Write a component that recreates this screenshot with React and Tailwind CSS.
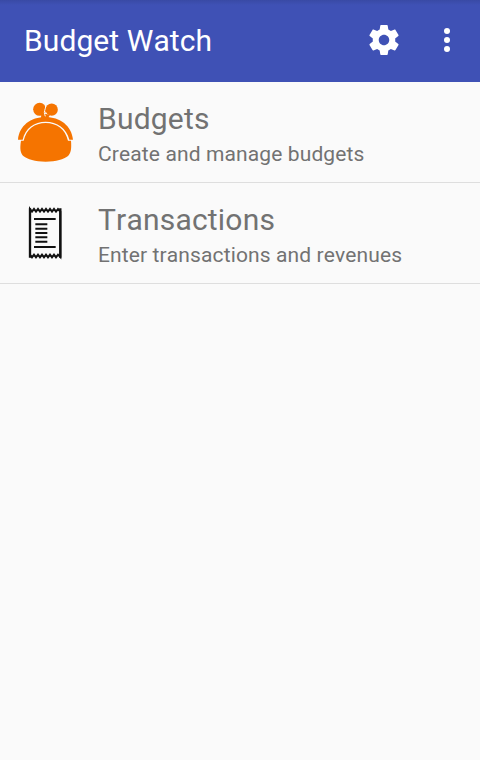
function GearIcon() {
  return (
    <svg viewBox="0 0 24 24" className="h-9 w-9" fill="currentColor">
      <path d="M19.43 12.98c.04-.32.07-.64.07-.98s-.03-.66-.07-.98l2.11-1.65c.19-.15.24-.42.12-.64l-2-3.46c-.12-.22-.39-.3-.61-.22l-2.49 1c-.52-.4-1.08-.73-1.69-.98l-.38-2.65C14.46 2.18 14.25 2 14 2h-4c-.25 0-.46.18-.49.42l-.38 2.65c-.61.25-1.17.59-1.69.98l-2.49-1c-.23-.09-.49 0-.61.22l-2 3.46c-.13.22-.07.49.12.64l2.11 1.65c-.04.32-.07.65-.07.98s.03.66.07.98l-2.11 1.65c-.19.15-.24.42-.12.64l2 3.46c.12.22.39.3.61.22l2.49-1c.52.4 1.08.73 1.69.98l.38 2.65c.03.24.24.42.49.42h4c.25 0 .46-.18.49-.42l.38-2.65c.61-.25 1.17-.59 1.69-.98l2.49 1c.23.09.49 0 .61-.22l2-3.46c.12-.22.07-.49-.12-.64l-2.11-1.65zM12 15.5c-1.93 0-3.5-1.57-3.5-3.5s1.57-3.5 3.5-3.5 3.5 1.57 3.5 3.5-1.57 3.5-3.5 3.5z" />
    </svg>
  );
}

function MoreIcon() {
  return (
    <svg viewBox="0 0 24 24" className="h-9 w-9" fill="currentColor">
      <circle cx="12" cy="6" r="2" />
      <circle cx="12" cy="12" r="2" />
      <circle cx="12" cy="18" r="2" />
    </svg>
  );
}

function PurseIcon() {
  return (
    <svg viewBox="0 0 210 225" className="h-[75px] w-[70px]" fill="#f57400">
      <circle cx="89" cy="43" r="19.5" />
      <circle cx="125" cy="44" r="18.5" />
      <path d="M94 56h10l16 3-6 10H93z" />
      <path d="M106 30c3 9-3 14-3 22 0 5 2 8 3 12" fill="none" stroke="#fafafa" strokeWidth="3" />
      <path d="M24 134C28 92 62 66 106 66s79 26 83 68h-11C170 100 141 80 107 80S45 100 38 134z" />
      <path d="M41 137C49 103 74 84 107 84s59 19 67 53h9c2 24 0 38-10 47-11 9-34 16-66 16s-55-7-66-16c-10-9-12-23-8-47h8z" />
    </svg>
  );
}

function ReceiptIcon() {
  return (
    <svg viewBox="0 0 150 195" className="h-[65px] w-[50px]" fill="none" stroke="#111" strokeWidth="6">
      <path d="M30 27l6 8 6-8 6 8 6-8 6 8 6-8 6 8 6-8 6 8 6-8 6 8 6-8 6 8 6-8 7 8v136l-7-7-6 8-6-8-6 8-6-8-6 8-6-8-6 8-6-8-6 8-6-8-6 8-6-8-6 8-6-8z" fill="#fafafa" />
      <path d="M30 25v148M121 25v148" strokeWidth="7" />
      <path d="M42 57h65M46 73h36M46 86h36M46 99h36M46 112h36M46 125h36M42 141h65" />
    </svg>
  );
}

function Row({ icon, title, detail }) {
  return (
    <li className="flex h-[101px] border-b border-[#dedede]">
      <div className="flex w-[98px] shrink-0 pt-[13px]">{icon}</div>
      <div className="pt-[19px]">
        <h2 className="text-[30px] leading-[35px] tracking-[0.2px]">{title}</h2>
        <p className="mt-[6px] text-[21px] leading-[25px] tracking-[0.12px]">{detail}</p>
      </div>
    </li>
  );
}

export default function App() {
  return (
    <div className="h-[760px] w-[480px] overflow-hidden bg-[#fafafa] font-[Roboto,sans-serif] [font-kerning:none]">
      <header className="flex h-[82px] items-center bg-[#3f51b5] bg-[linear-gradient(#394aa5,#3f51b5_5px)] pb-[2px] pl-6 text-white">
        <h1 className="flex-1 pt-[2px] text-[30px] leading-none tracking-[0.08px]">Budget Watch</h1>
        <div className="flex gap-[27px] pr-[15px]">
          <GearIcon />
          <MoreIcon />
        </div>
      </header>
      <ul className="text-[#727272]">
        <Row icon={<div className="pl-[10px]"><PurseIcon /></div>} title="Budgets" detail="Create and manage budgets" />
        <Row icon={<div className="pl-5 pt-1"><ReceiptIcon /></div>} title="Transactions" detail="Enter transactions and revenues" />
      </ul>
    </div>
  );
}
